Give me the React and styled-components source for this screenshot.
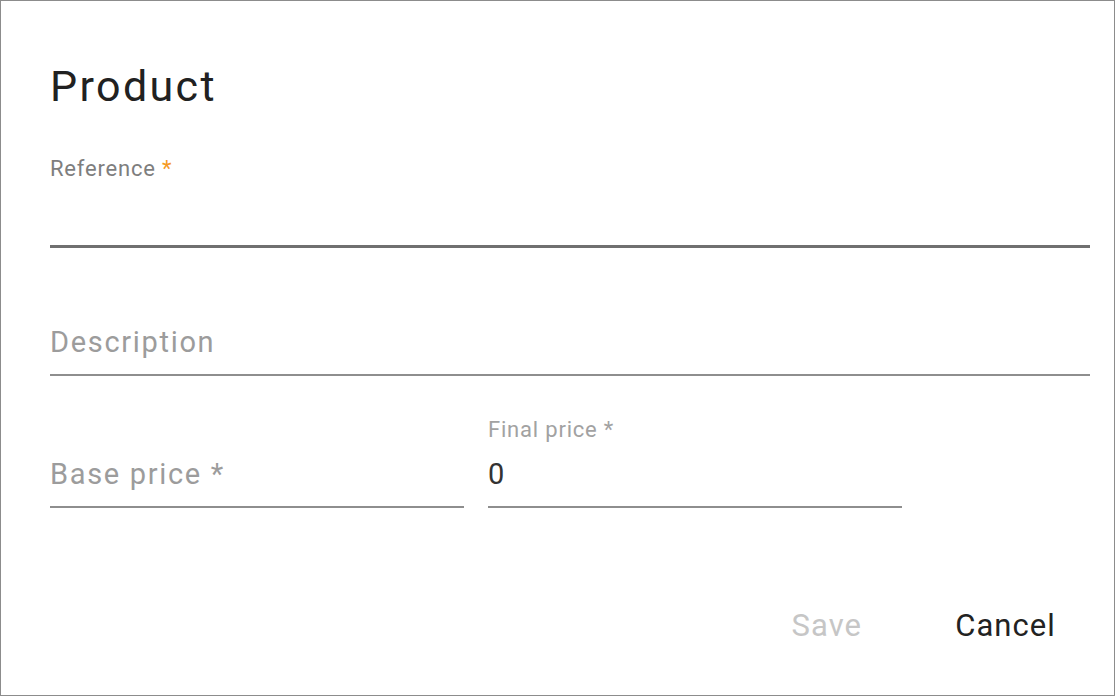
import styled, { createGlobalStyle } from "styled-components"

const GlobalStyle = createGlobalStyle`
    html, body {
        margin: 0;
        padding: 0;
        background: #FFFFFF;
    }
    body {
        font-family: Roboto, "Liberation Sans", Arial, sans-serif;
    }
`

const Dialog = styled.div`
    box-sizing: border-box;
    width: 1115px;
    height: 696px;
    border: 1px solid #8C8C8C;
    background: #FFFFFF;
    padding: 60px 24px 0 49px;
    display: flex;
    flex-direction: column;
    letter-spacing: 0.05em;
`

const Title = styled.h2`
    margin: 0 0 44px 0;
    font-size: 43px;
    line-height: 50px;
    font-weight: 400;
    letter-spacing: 0.055em;
    color: #212121;
`

const Fields = styled.div`
    display: flex;
    flex-direction: column;
    gap: 37px;
`

const Row = styled.div`
    display: grid;
    grid-template-columns: 414px 414px;
    column-gap: 24px;
    margin-top: 3px;
`

const FieldBox = styled.div`
    display: flex;
    flex-direction: column;
    border-bottom: ${({ focused }) => focused ? "3px solid #707070" : "2px solid #8E8E8E"};
    margin-bottom: ${({ focused }) => focused ? "-1px" : "0"};
`

const Label = styled.div`
    height: 28px;
    margin-bottom: 8px;
    font-size: 22px;
    line-height: 28px;
    color: ${({ light }) => light ? "#A2A2A2" : "#7E7E7E"};
    white-space: nowrap;
`

const Star = styled.span`
    color: #F59A23;
`

const Value = styled.div`
    height: 44px;
    padding-bottom: 10px;
    font-size: 29px;
    line-height: 44px;
    letter-spacing: 0.058em;
    color: ${({ placeholder }) => placeholder ? "#9C9C9C" : "#333333"};
    white-space: nowrap;
`

const Actions = styled.div`
    display: flex;
    justify-content: flex-end;
    gap: 25px;
    margin-top: 94px;
`

const Button = styled.button`
    border: none;
    outline: none;
    background: transparent;
    padding: 0 34px;
    height: 48px;
    font-family: inherit;
    font-size: 31px;
    line-height: 48px;
    font-weight: 400;
    letter-spacing: 0.035em;
    color: ${({ disabled }) => disabled ? "#C6C6C6" : "#222222"};
    cursor: ${({ disabled }) => disabled ? "default" : "pointer"};
`

const Field = ({ label, required, value, placeholder, focused, light }) => (
    <FieldBox focused={focused}>
        <Label light={light}>
            {label}
            {required && label && <Star> *</Star>}
        </Label>
        <Value placeholder={!value}>{value || placeholder}</Value>
    </FieldBox>
)

export default function App() {
    return (
        <>
            <GlobalStyle />
            <Dialog>
                <Title>Product</Title>
                <Fields>
                    <Field label="Reference" required focused />
                    <Field placeholder="Description" />
                    <Row>
                        <Field placeholder="Base price *" />
                        <Field label="Final price *" light value="0" />
                    </Row>
                </Fields>
                <Actions>
                    <Button disabled>Save</Button>
                    <Button>Cancel</Button>
                </Actions>
            </Dialog>
        </>
    )
}
